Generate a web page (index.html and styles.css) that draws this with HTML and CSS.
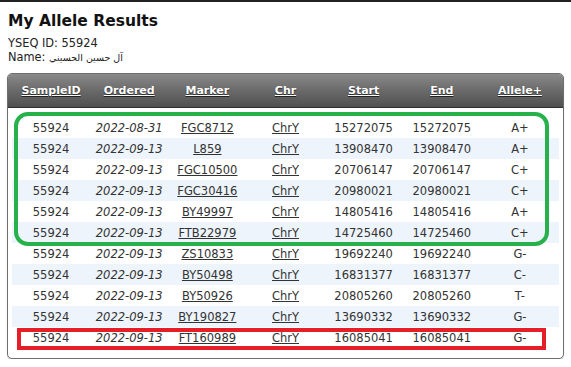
FILE: index.html
```html
<!DOCTYPE html>
<html>
<head>
<meta charset="utf-8">
<link rel="stylesheet" href="styles.css">
</head>
<body>
<div class="page">
  <h1 class="title">My Allele Results</h1>
  <div class="meta">YSEQ ID: 55924</div>
  <div class="meta">Name: <span class="ar">آل حسين الحسيني</span></div>
  <div class="box">
    <div class="head">
      <a class="hc">SampleID</a><a class="hc">Ordered</a><a class="hc">Marker</a><a class="hc">Chr</a><a class="hc">Start</a><a class="hc">End</a><a class="hc">Allele+</a>
    </div>
    <div class="rows">
      <div class="row"><span>55924</span><span class="it">2022-08-31</span><span><a>FGC8712</a></span><span><a>ChrY</a></span><span>15272075</span><span>15272075</span><span>A+</span></div>
      <div class="row"><span>55924</span><span class="it">2022-09-13</span><span><a>L859</a></span><span><a>ChrY</a></span><span>13908470</span><span>13908470</span><span>A+</span></div>
      <div class="row"><span>55924</span><span class="it">2022-09-13</span><span><a>FGC10500</a></span><span><a>ChrY</a></span><span>20706147</span><span>20706147</span><span>C+</span></div>
      <div class="row"><span>55924</span><span class="it">2022-09-13</span><span><a>FGC30416</a></span><span><a>ChrY</a></span><span>20980021</span><span>20980021</span><span>C+</span></div>
      <div class="row"><span>55924</span><span class="it">2022-09-13</span><span><a>BY49997</a></span><span><a>ChrY</a></span><span>14805416</span><span>14805416</span><span>A+</span></div>
      <div class="row"><span>55924</span><span class="it">2022-09-13</span><span><a>FTB22979</a></span><span><a>ChrY</a></span><span>14725460</span><span>14725460</span><span>C+</span></div>
      <div class="row"><span>55924</span><span class="it">2022-09-13</span><span><a>ZS10833</a></span><span><a>ChrY</a></span><span>19692240</span><span>19692240</span><span>G-</span></div>
      <div class="row"><span>55924</span><span class="it">2022-09-13</span><span><a>BY50498</a></span><span><a>ChrY</a></span><span>16831377</span><span>16831377</span><span>C-</span></div>
      <div class="row"><span>55924</span><span class="it">2022-09-13</span><span><a>BY50926</a></span><span><a>ChrY</a></span><span>20805260</span><span>20805260</span><span>T-</span></div>
      <div class="row"><span>55924</span><span class="it">2022-09-13</span><span><a>BY190827</a></span><span><a>ChrY</a></span><span>13690332</span><span>13690332</span><span>G-</span></div>
      <div class="row"><span>55924</span><span class="it">2022-09-13</span><span><a>FT160989</a></span><span><a>ChrY</a></span><span>16085041</span><span>16085041</span><span>G-</span></div>
    </div>
    <div class="mark-green"></div>
    <div class="mark-red"></div>
  </div>
</div>
</body>
</html>
```
FILE: styles.css
```css
html, body {
  margin: 0;
  padding: 0;
  background: #fff;
}
body {
  border-top: 2px solid #222;
  font-family: "DejaVu Sans", Verdana, sans-serif;
  color: #333;
}
.page {
  padding: 0 7px;
}
.title {
  margin: 9px 0 5px 1px;
  font-size: 15.5px;
  line-height: 20px;
  font-weight: bold;
  color: #111;
}
.meta {
  margin-left: 1px;
  font-size: 11.4px;
  line-height: 14px;
  color: #222;
}
.ar {
  font-size: 9.5px;
}
.box {
  position: relative;
  margin-top: 8px;
  border: 1px solid #6e6e6e;
  border-radius: 5px;
  overflow: hidden;
  box-shadow: 0 1px 1px rgba(0,0,0,0.25);
}
.head {
  display: grid;
  grid-template-columns: repeat(7, 1fr);
  padding: 0 4px;
  height: 33px;
  align-items: center;
  background: linear-gradient(to bottom, #8a8a8a 0%, #6a6a6a 50%, #505050 100%);
  border-bottom: 1px solid #2e2e2e;
}
.hc {
  text-align: center;
  font-size: 11px;
  font-weight: bold;
  color: #fff;
  text-decoration: underline;
  text-shadow: 0 1px 1px #222;
}
.rows {
  padding: 9px 4px 10px;
}
.row {
  display: grid;
  grid-template-columns: repeat(7, 1fr);
  height: 21px;
  align-items: center;
  font-size: 11.5px;
  color: #333;
}
.row:nth-child(even) {
  background: #edf4fb;
}
.row span {
  text-align: center;
}
.row .it {
  font-style: italic;
}
.row a {
  color: #333;
  text-decoration: underline;
}
.mark-green {
  position: absolute;
  left: 6px;
  top: 38px;
  width: 527px;
  height: 126px;
  border: 4px solid #27b14a;
  border-radius: 14px;
}
.mark-red {
  position: absolute;
  left: 9px;
  top: 254px;
  width: 521px;
  height: 14px;
  border: 4px solid #e61e28;
}
```
